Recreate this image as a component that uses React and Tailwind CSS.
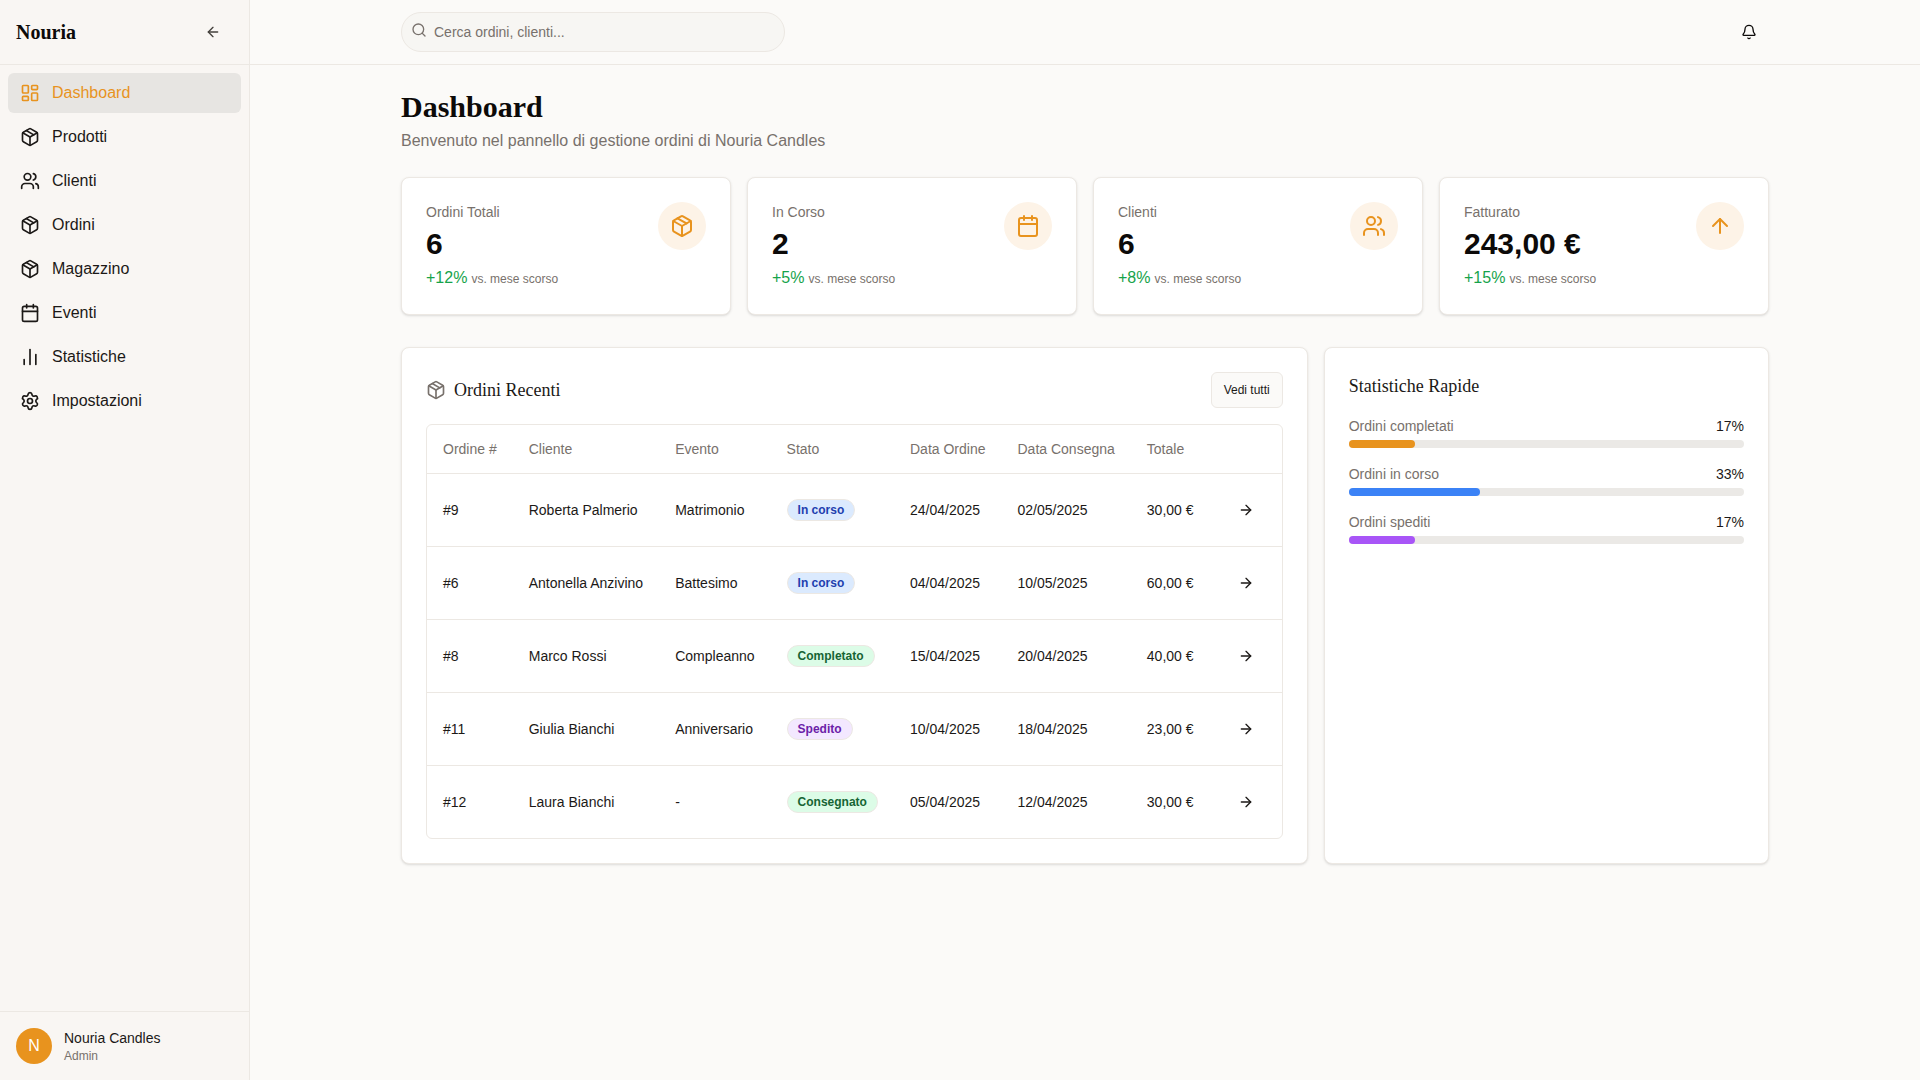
import { LayoutDashboard, Package, Users, Calendar, ChartNoAxesColumn, Settings, ArrowLeft, ArrowRight, ArrowUp, Search, Bell } from "lucide-react";

const nav = [
  ["Dashboard", LayoutDashboard, true],
  ["Prodotti", Package],
  ["Clienti", Users],
  ["Ordini", Package],
  ["Magazzino", Package],
  ["Eventi", Calendar],
  ["Statistiche", ChartNoAxesColumn],
  ["Impostazioni", Settings],
];

const cards = [
  ["Ordini Totali", "6", "+12%", Package],
  ["In Corso", "2", "+5%", Calendar],
  ["Clienti", "6", "+8%", Users],
  ["Fatturato", "243,00 €", "+15%", ArrowUp],
];

const blue = "bg-[#dbeafe] text-[#1e40af]";
const green = "bg-[#dcfce7] text-[#166534]";
const purple = "bg-[#f3e8ff] text-[#6b21a8]";

const orders = [
  ["#9", "Roberta Palmerio", "Matrimonio", "In corso", blue, "24/04/2025", "02/05/2025", "30,00 €"],
  ["#6", "Antonella Anzivino", "Battesimo", "In corso", blue, "04/04/2025", "10/05/2025", "60,00 €"],
  ["#8", "Marco Rossi", "Compleanno", "Completato", green, "15/04/2025", "20/04/2025", "40,00 €"],
  ["#11", "Giulia Bianchi", "Anniversario", "Spedito", purple, "10/04/2025", "18/04/2025", "23,00 €"],
  ["#12", "Laura Bianchi", "-", "Consegnato", green, "05/04/2025", "12/04/2025", "30,00 €"],
];

const stats = [
  ["Ordini completati", "17%", "w-[16.7%]", "bg-[#e8931e]"],
  ["Ordini in corso", "33%", "w-[33.2%]", "bg-[#3b82f6]"],
  ["Ordini spediti", "17%", "w-[16.7%]", "bg-[#a855f7]"],
];

const heads = ["Ordine #", "Cliente", "Evento", "Stato", "Data Ordine", "Data Consegna", "Totale", ""];

export default function App() {
  return (
    <div className="flex h-screen w-full overflow-hidden bg-[#fbfaf8] font-['Liberation_Sans',Arial,sans-serif] text-[#1c1917] antialiased">
      <aside className="flex w-[250px] shrink-0 flex-col border-r border-[#ece8e3] bg-[#f9f6f3]">
        <div className="flex h-[65px] shrink-0 items-center justify-between border-b border-[#ece8e3] pl-4 pr-[20px]">
          <span className="font-['Liberation_Serif',serif] text-xl font-bold text-[#0c0a09]">Nouria</span>
          <button className="flex h-8 w-8 items-center justify-center text-[#44403c]">
            <ArrowLeft size={16} />
          </button>
        </div>
        <nav className="flex flex-1 flex-col gap-1 p-2">
          {nav.map(([label, Icon, active]) => (
            <div
              key={label}
              className={`flex h-10 items-center gap-3 rounded-md px-3 text-base ${active ? "bg-[#e7e5e2] text-[#e8931e]" : "text-[#1c1917]"}`}
            >
              <Icon size={20} />
              <span>{label}</span>
            </div>
          ))}
        </nav>
        <div className="flex items-center gap-3 border-t border-[#ece8e3] p-4">
          <div className="flex h-9 w-9 items-center justify-center rounded-full bg-[#e8931e] text-base text-white">N</div>
          <div className="flex flex-col">
            <span className="text-sm leading-5">Nouria Candles</span>
            <span className="text-xs leading-4 text-[#78716c]">Admin</span>
          </div>
        </div>
      </aside>

      <div className="flex min-w-0 flex-1 flex-col">
        <header className="h-[65px] shrink-0 border-b border-[#ece8e3]">
          <div className="mx-auto flex h-16 max-w-[1400px] items-center justify-between px-4">
            <div className="relative w-96">
              <Search size={16} className="absolute left-[10px] top-[10px] text-[#78716c]" />
              <input
                readOnly
                placeholder="Cerca ordini, clienti..."
                className="h-10 w-full rounded-full border border-[#ece8e3] bg-[#f7f6f3] pl-8 pr-3 text-sm outline-none placeholder:text-[#78716c]"
              />
            </div>
            <button className="flex h-10 w-10 items-center justify-center text-[#0c0a09]">
              <Bell size={16} />
            </button>
          </div>
        </header>

        <main className="flex-1 overflow-hidden">
          <div className="mx-auto max-w-[1400px] px-4 py-6">
            <h1 className="font-['Liberation_Serif',serif] text-3xl leading-9 font-bold text-[#0c0a09]">Dashboard</h1>
            <p className="mt-1 text-base text-[#78716c]">Benvenuto nel pannello di gestione ordini di Nouria Candles</p>

            <div className="mt-6 grid grid-cols-4 gap-4">
              {cards.map(([label, value, delta, Icon]) => (
                <div key={label} className="flex items-start justify-between rounded-lg border border-[#ece8e3] bg-white p-6 shadow-sm">
                  <div>
                    <div className="text-sm text-[#78716c]">{label}</div>
                    <div className="mt-1 text-3xl leading-9 font-bold text-[#0c0a09]">{value}</div>
                    <div className="mt-1 flex items-baseline gap-1">
                      <span className="text-base text-[#16a34a]">{delta}</span>
                      <span className="text-xs text-[#78716c]">vs. mese scorso</span>
                    </div>
                  </div>
                  <div className="flex h-12 w-12 items-center justify-center rounded-full bg-[#fdf3e7] text-[#e8931e]">
                    <Icon size={24} />
                  </div>
                </div>
              ))}
            </div>

            <div className="mt-8 grid grid-cols-3 gap-4">
              <section className="col-span-2 rounded-lg border border-[#ece8e3] bg-white p-6 shadow-sm">
                <div className="mb-4 flex items-center justify-between">
                  <div className="flex items-center gap-2">
                    <Package size={20} className="text-[#78716c]" />
                    <h2 className="font-['Liberation_Serif',serif] text-lg text-[#1c1917]">Ordini Recenti</h2>
                  </div>
                  <button className="h-9 rounded-md border border-[#ece8e3] bg-[#fbfaf8] px-3 text-xs">Vedi tutti</button>
                </div>
                <div className="overflow-hidden rounded-md border border-[#ece8e3]">
                  <table className="w-full text-sm">
                    <thead>
                      <tr className="h-12">
                        {heads.map((h, i) => (
                          <th key={i} className="px-4 text-left font-normal text-[#78716c]">{h}</th>
                        ))}
                      </tr>
                    </thead>
                    <tbody>
                      {orders.map(([id, client, event, status, cls, d1, d2, total]) => (
                        <tr key={id} className="h-[73px] border-t border-[#ece8e3]">
                          <td className="px-4">{id}</td>
                          <td className="px-4">{client}</td>
                          <td className="px-4">{event}</td>
                          <td className="px-4">
                            <span className={`inline-flex rounded-full border border-[#ece8e3] px-2.5 py-0.5 text-xs font-bold ${cls}`}>{status}</span>
                          </td>
                          <td className="px-4">{d1}</td>
                          <td className="px-4">{d2}</td>
                          <td className="px-4">{total}</td>
                          <td className="px-4">
                            <button className="flex h-10 w-10 items-center justify-center">
                              <ArrowRight size={16} />
                            </button>
                          </td>
                        </tr>
                      ))}
                    </tbody>
                  </table>
                </div>
              </section>

              <section className="rounded-lg border border-[#ece8e3] bg-white p-6 shadow-sm">
                <h2 className="mb-4 font-['Liberation_Serif',serif] text-lg text-[#1c1917]">Statistiche Rapide</h2>
                <div className="flex flex-col gap-4">
                  {stats.map(([label, pct, w, color]) => (
                    <div key={label}>
                      <div className="mb-1 flex justify-between text-sm">
                        <span className="text-[#78716c]">{label}</span>
                        <span>{pct}</span>
                      </div>
                      <div className="h-2 rounded-full bg-[#ebe9e6]">
                        <div className={`h-2 rounded-full ${w} ${color}`} />
                      </div>
                    </div>
                  ))}
                </div>
              </section>
            </div>
          </div>
        </main>
      </div>
    </div>
  );
}
